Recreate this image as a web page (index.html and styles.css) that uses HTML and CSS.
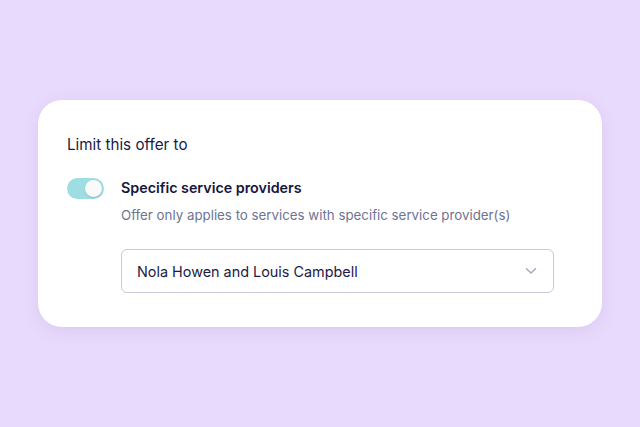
FILE: index.html
```html
<!DOCTYPE html>
<html>
<head>
<meta charset="utf-8">
<link rel="stylesheet" href="styles.css">
</head>
<body>
<div class="page">
  <div class="card">
    <div class="heading">Limit this offer to</div>
    <div class="option">
      <div class="toggle"><span class="knob"></span></div>
      <div class="option-body">
        <div class="option-title">Specific service providers</div>
        <div class="option-desc">Offer only applies to services with specific service provider(s)</div>
        <div class="select">
          <span class="select-value">Nola Howen and Louis Campbell</span>
          <svg class="chevron" width="12" height="8" viewBox="0 0 12 8"><path d="M1.5 1.8 L6 6 L10.5 1.8" fill="none" stroke="#a3a6bf" stroke-width="1.4" stroke-linecap="round" stroke-linejoin="round"/></svg>
        </div>
      </div>
    </div>
  </div>
</div>
</body>
</html>
```
FILE: styles.css
```css
html, body {
  margin: 0;
  padding: 0;
}
body {
  background: #e8dafc;
  font-family: Inter, "Noto Sans", sans-serif;
  color: #14143c;
}
.page {
  width: 640px;
  height: 427px;
  display: flex;
  align-items: center;
  justify-content: center;
}
.card {
  width: 564px;
  height: 227px;
  box-sizing: border-box;
  background: #ffffff;
  border-radius: 24px;
  box-shadow: 0 4px 16px rgba(120, 90, 170, 0.12);
  padding: 35px 48px 0 29px;
}
.heading {
  font-size: 15.2px;
  line-height: 20px;
  color: #1b1b45;
}
.option {
  display: flex;
  gap: 17px;
  margin-top: 22px;
}
.toggle {
  width: 37px;
  height: 21px;
  border-radius: 11px;
  background: #9edde1;
  position: relative;
  flex: none;
  margin-top: 1px;
}
.knob {
  position: absolute;
  right: 2px;
  top: 2px;
  width: 17px;
  height: 17px;
  border-radius: 50%;
  background: #fafafa;
  box-shadow: 0 1px 2px rgba(0,0,0,0.12);
}
.option-body {
  flex: 1;
  display: flex;
  flex-direction: column;
}
.option-title {
  font-size: 14.3px;
  font-weight: 600;
  line-height: 22px;
  color: #16163f;
}
.option-desc {
  font-size: 13.3px;
  line-height: 18px;
  margin-top: 7px;
  color: #6f7394;
}
.select {
  margin-top: 25px;
  height: 44px;
  box-sizing: border-box;
  border: 1px solid #c8c9da;
  border-radius: 6px;
  display: flex;
  align-items: center;
  justify-content: space-between;
  padding: 0 16px 0 15px;
}
.select-value {
  font-size: 14.4px;
  color: #1b1b45;
}
.chevron {
  display: block;
}
```
